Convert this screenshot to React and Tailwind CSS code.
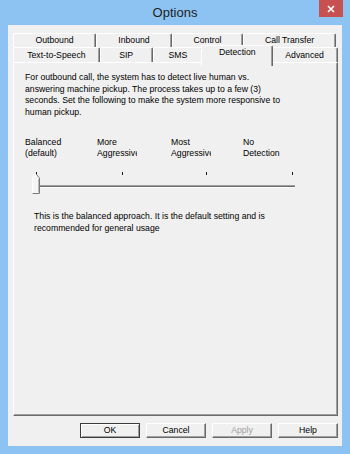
import React from "react";

const rowOne = [
  { label: "Outbound", w: "w-[83px]" },
  { label: "Inbound", w: "w-[76px]" },
  { label: "Control", w: "w-[71px]" },
  { label: "Call Transfer", w: "w-[93px]" },
];

const rowTwo = [
  { label: "Text-to-Speech", w: "w-[87px]" },
  { label: "SIP", w: "w-[53px]" },
  { label: "SMS", w: "w-[51px]" },
  { label: "Detection", w: "w-[66px]", active: true },
  { label: "Advanced", w: "w-[67px]" },
];

const levels = [
  ["Balanced", "(default)"],
  ["More", "Aggressive"],
  ["Most", "Aggressive"],
  ["No", "Detection"],
];

function Tab({ label, w, active }) {
  if (active) {
    return (
      <div
        className={`${w} relative z-10 -mx-[2px] -mt-[2px] -mb-[1px] h-[18px] box-content px-[2px] bg-[#f0f0f0] border-t border-l border-white border-r border-r-[#696969] shadow-[inset_-1px_0_0_#a0a0a0] rounded-t-[2px] flex items-start justify-center pt-[2px]`}
      >
        {label}
      </div>
    );
  }
  return (
    <div
      className={`${w} h-full bg-[#f0f0f0] border-t border-l border-white border-r border-r-[#696969] shadow-[inset_-1px_0_0_#a0a0a0] rounded-t-[2px] flex items-center justify-center`}
    >
      {label}
    </div>
  );
}

function Button({ children, primary, disabled }) {
  const edge = primary
    ? "border border-[#3c3c3c] shadow-[inset_1px_1px_0_#fff,inset_-1px_-1px_0_#a0a0a0]"
    : "border border-t-white border-l-white border-r-[#696969] border-b-[#696969] shadow-[inset_-1px_-1px_0_#a0a0a0]";
  return (
    <div
      className={`w-[60px] h-[15px] bg-[#f0f0f0] ${edge} flex items-center justify-center ${
        disabled ? "text-[#a0a0a0]" : "text-black"
      }`}
    >
      {children}
    </div>
  );
}

function Slider() {
  // trackbar drawing: tick marks, channel and the pointed thumb
  const ticks = [11, 97, 181, 267];
  return (
    <svg width="276" height="26" viewBox="0 0 276 26" className="block">
      {ticks.map((x) => (
        <rect key={x} x={x} y="3" width="1" height="3" fill="#1a1a1a" />
      ))}
      <rect x="14" y="16" width="256" height="1" fill="#a0a0a0" />
      <rect x="14" y="17" width="256" height="1" fill="#6d6d6d" />
      <rect x="14" y="18" width="256" height="1" fill="#ffffff" />
      <polygon points="7.5,24.5 7.5,9 11,5 14.5,9 14.5,24.5" fill="#f5f5f5" stroke="#ffffff" />
      <polyline points="11,5 14.5,9 14.5,24.5 7.5,24.5" fill="none" stroke="#7a7a7a" />
      <polyline points="13.5,10 13.5,23.5" fill="none" stroke="#b8b8b8" />
    </svg>
  );
}

export default function App() {
  return (
    <div className="w-[350px] h-[454px] bg-[#8cc3f2] flex flex-col font-['Liberation_Sans',Arial,sans-serif] text-[8.7px] text-black">
      <div className="h-[25px] grid grid-cols-[1fr_auto_1fr] items-start">
        <div />
        <div className="text-[13px] leading-[25px] text-[#1e1e1e]">Options</div>
        <div className="flex justify-end pr-[7px]">
          <div className="w-[24px] h-[17px] bg-[#c75050] flex items-center justify-center">
            <svg width="8" height="8" viewBox="0 0 8 8">
              <path d="M1 1 L7 7 M7 1 L1 7" stroke="#ffffff" strokeWidth="1.6" />
            </svg>
          </div>
        </div>
      </div>

      <div className="flex-1 mx-[8px] mb-[8px] bg-[#f0f0f0] flex flex-col pl-[5px] pr-[4px] pt-[8px] pb-[8px]">
        <div className="flex h-[14px] leading-none">
          {rowOne.map((t) => (
            <Tab key={t.label} {...t} />
          ))}
        </div>
        <div className="flex h-[15px] leading-none items-start">
          {rowTwo.map((t) => (
            <Tab key={t.label} {...t} />
          ))}
        </div>

        <div className="h-[354px] border-t border-l border-white border-r border-b border-r-[#696969] border-b-[#696969] shadow-[inset_-1px_-1px_0_#a0a0a0] pl-[11px] pt-[9px] leading-[11.5px]">
          <p>
            For outbound call, the system has to detect live human vs.
            <br />
            answering machine pickup. The process takes up to a few (3)
            <br />
            seconds. Set the following to make the system more responsive to
            <br />
            human pickup.
          </p>

          <div className="flex mt-[19px] leading-[11px]">
            {levels.map(([a, b], i) => (
              <div key={i} className={i === 1 ? "w-[74px]" : "w-[72px]"}>
                <div className="w-[40px] overflow-hidden whitespace-nowrap">
                  {a}
                  <br />
                  {b}
                </div>
              </div>
            ))}
          </div>

          <div className="mt-[10px]">
            <Slider />
          </div>

          <p className="mt-[15px] pl-[9px] leading-[12px]">
            This is the balanced approach. It is the default setting and is
            <br />
            recommended for general usage
          </p>
        </div>

        <div className="mt-[7px] flex justify-end gap-[6px]">
          <Button primary>OK</Button>
          <Button>Cancel</Button>
          <Button disabled>Apply</Button>
          <Button>Help</Button>
        </div>
      </div>
    </div>
  );
}
